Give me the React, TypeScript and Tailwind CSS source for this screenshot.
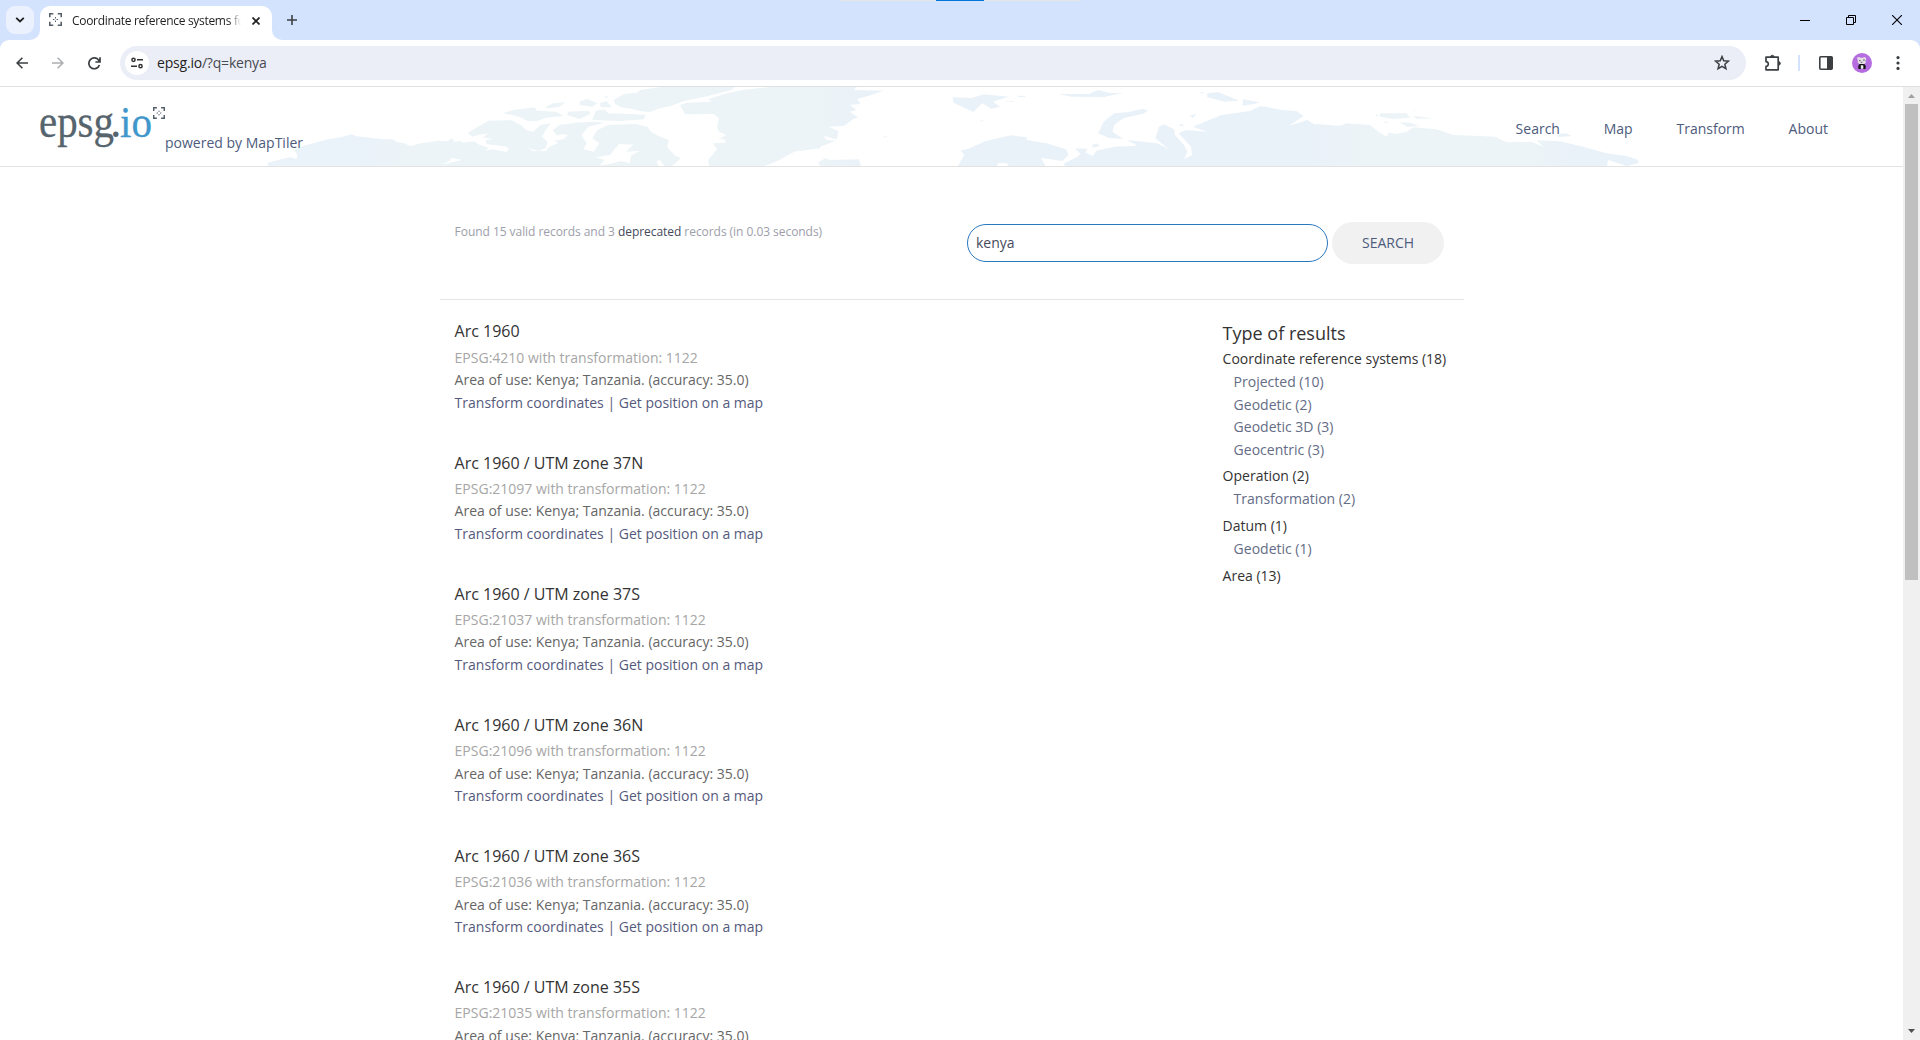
import React from "react";

const results = [
  { name: "Arc 1960", code: "4210" },
  { name: "Arc 1960 / UTM zone 37N", code: "21097" },
  { name: "Arc 1960 / UTM zone 37S", code: "21037" },
  { name: "Arc 1960 / UTM zone 36N", code: "21096" },
  { name: "Arc 1960 / UTM zone 36S", code: "21036" },
  { name: "Arc 1960 / UTM zone 35S", code: "21035" },
];

const groups = [
  {
    title: "Coordinate reference systems (18)",
    items: ["Projected (10)", "Geodetic (2)", "Geodetic 3D (3)", "Geocentric (3)"],
  },
  { title: "Operation (2)", items: ["Transformation (2)"] },
  { title: "Datum (1)", items: ["Geodetic (1)"] },
  { title: "Area (13)", items: [] },
];

function FocusMark({ className }: { className: string }) {
  return (
    <svg viewBox="0 0 14 14" className={className} fill="none" stroke="#55606a" strokeWidth="1.7">
      <path d="M.85 4.6V.85H4.600M9.400.85h3.750V4.600M13.150 9.400v3.750H9.400M4.600 13.150H.85V9.400" />
      <path d="M7 4.200v1.600M7 8.200v1.600M4.200 7h1.600M8.200 7h1.600" strokeWidth="1.1" />
    </svg>
  );
}

function TabStrip() {
  return (
    <div className="relative flex h-10 shrink-0 items-start bg-[#d3e2fd]">
      <div className="absolute top-0 left-[840px] h-px w-[241px] bg-[#e4e4e4] pl-24">
        <div className="h-px w-12 bg-[#0078d7]" />
      </div>
      <div className="mt-1.5 ml-1.5 flex h-7 w-7 items-center justify-center rounded-[9px] bg-[#ebf2fe]">
        <svg width="10" height="6" viewBox="0 0 10 6" fill="none" stroke="#1f1f1f" strokeWidth="1.8">
          <path d="M1.2.8 5 4.5 8.8.8" />
        </svg>
      </div>
      <div className="relative mt-1.5 ml-1.5 flex h-[34px] w-[232px] items-center rounded-t-[10px] bg-white pb-1">
        <svg className="absolute bottom-0 -left-2.5" width="10" height="10">
          <path d="M10 0v10H0A10 10 0 0 0 10 0" fill="#fff" />
        </svg>
        <svg className="absolute -right-2.5 bottom-0" width="10" height="10">
          <path d="M0 0v10h10A10 10 0 0 1 0 0" fill="#fff" />
        </svg>
        <FocusMark className="-mt-1 ml-[9px] h-[13px] w-[13px]" />
        <div className="ml-2.5 w-[169px] overflow-hidden text-[12px] leading-5 tracking-[-0.31px] whitespace-nowrap text-[#1f1f1f] [mask-image:linear-gradient(to_right,#000_157px,transparent_169px)]">
          Coordinate reference systems for
        </div>
        <svg className="ml-[11px]" width="8" height="8" viewBox="0 0 8 8" stroke="#1f1f1f" strokeWidth="1.7">
          <path d="M.5.5l7 7M7.5.5l-7 7" />
        </svg>
      </div>
      <svg className="mt-[15px] ml-[15px]" width="10" height="10" viewBox="0 0 10 10" stroke="#3c4043" strokeWidth="1.6">
        <path d="M5 0v10M0 5h10" />
      </svg>
      <div className="mt-[15px] mr-[18px] ml-auto flex gap-9">
        <svg width="10" height="10" stroke="#000">
          <path d="M0 5.5h10" />
        </svg>
        <svg width="10" height="10" fill="none" stroke="#000">
          <path d="M.5 2.5h7v7h-7zM2.5 2.5v-2h7v7h-2" />
        </svg>
        <svg width="10" height="10" stroke="#000" strokeWidth="1.1">
          <path d="M0 0l10 10M10 0L0 10" />
        </svg>
      </div>
    </div>
  );
}

function Toolbar() {
  return (
    <div className="shrink-0 bg-[#d3e2fd]">
      <div className="flex h-[47px] items-center rounded-t-[9px] border-b border-[#dedfe0] bg-white">
        <svg className="ml-4" width="12" height="12" viewBox="0 0 12 12" fill="none" stroke="#3c3f42" strokeWidth="1.6">
          <path d="M12 6H1.2M6.4.7 1.1 6l5.3 5.3" />
        </svg>
        <svg className="ml-6" width="12" height="12" viewBox="0 0 12 12" fill="none" stroke="#adafb1" strokeWidth="1.6">
          <path d="M0 6h10.8M5.6.7 10.9 6l-5.3 5.3" />
        </svg>
        <svg className="ml-[23.5px]" width="13" height="13" viewBox="0 0 13 13" fill="none" stroke="#3c3f42" strokeWidth="1.7">
          <path d="M11.4 8A5.4 5.4 0 1 1 10.8 3.4L12 5M12 .2V5H7.4" />
        </svg>
        <div className="ml-[19.5px] flex h-[34px] w-[1626px] items-center rounded-full bg-[#ebeef7]">
          <div className="ml-[5px] flex h-6 w-6 items-center justify-center rounded-full bg-white">
            <svg width="12" height="12" viewBox="0 0 12 12" fill="none" stroke="#303234" strokeWidth="1.5">
              <circle cx="2.5" cy="2.8" r="1.6" />
              <path d="M6 2.8h6M0 9.2h6" />
              <circle cx="9.5" cy="9.2" r="1.6" />
            </svg>
          </div>
          <span className="ml-2 pb-px text-[14px] tracking-[-0.2px] text-[#474a50]">
            <span className="text-[#1f1f1f]">epsg.io</span>/?q=kenya
          </span>
          <svg className="mr-4 ml-auto" width="16" height="16" viewBox="0 0 16 16" fill="none" stroke="#3c3f42" strokeWidth="1.5">
            <path d="M8 1.6l1.75 4.25 4.6.38-3.5 3 1.07 4.5L8 11.33l-3.92 2.4 1.07-4.5-3.5-3 4.6-.38z" />
          </svg>
        </div>
        <svg className="ml-[18px]" width="18" height="18" viewBox="0 0 18 18" fill="none" stroke="#3c3f42" strokeWidth="1.7">
          <path d="M2 3.2h12.2v12.6H2v-3.4c1.5 0 2.3-1.1 2.3-2.4S3.500 7.600 2 7.600z" strokeLinejoin="round" />
          <path d="M6.500 3a1.800 1.800 0 0 1 3.600 0zM14.600 7.600a1.800 1.800 0 0 1 0 3.600z" fill="#3c3f42" strokeWidth=".8" />
        </svg>
        <div className="ml-4 h-4 w-0.5 bg-[#d3e2fd]" />
        <svg className="ml-[19px]" width="14" height="14" fill="none" stroke="#3c3f42" strokeWidth="1.6">
          <rect x=".8" y=".8" width="12.400" height="12.400" rx="1" />
          <path d="M8.500 1h4.500v12H8.500z" fill="#3c3f42" strokeWidth="1" />
        </svg>
        <svg className="ml-[19px]" width="20" height="20" viewBox="0 0 20 20">
          <circle cx="10" cy="10" r="10" fill="#b56ce0" />
          <path d="M5 4.500l2-.5 1.500.8h2L13 4l1.200 1.500-.7 2.200.3 2-2 1.800H8L5.700 9.600l.1-2.400z" fill="#e3dfe4" />
          <path d="M7 7.600h1.600M11 7h1.800M8.800 9.300h1.500" stroke="#554c58" strokeWidth=".9" />
          <path d="M7.500 11h4.800l1.500 2-.3 3H6.500l-.3-3z" fill="#151317" />
          <path d="M8.800 12.300h2.500v3.500H8.800z" fill="#f2eff4" />
        </svg>
        <svg className="ml-6" width="4" height="14" fill="#3c3f42">
          <circle cx="2" cy="1.600" r="1.600" />
          <circle cx="2" cy="7" r="1.600" />
          <circle cx="2" cy="12.400" r="1.600" />
        </svg>
      </div>
    </div>
  );
}

function WorldBand() {
  return (
    <svg className="absolute top-0 left-0" width="1903" height="79" viewBox="0 0 1903 79">
      <defs>
        <linearGradient id="tint" gradientUnits="userSpaceOnUse" x1="260" y1="0" x2="1640" y2="0">
          <stop offset="0" stopColor="#eaf2fa" />
          <stop offset="0.07" stopColor="#eaf2fa" />
          <stop offset="0.11" stopColor="#ecf4f7" />
          <stop offset="0.4" stopColor="#ecf4f7" />
          <stop offset="0.44" stopColor="#eaf2f9" />
          <stop offset="0.76" stopColor="#eaf2f9" />
          <stop offset="0.81" stopColor="#ecf4f7" />
          <stop offset="0.92" stopColor="#ecf4f7" />
          <stop offset="0.95" stopColor="#eaf2f9" />
        </linearGradient>
        <mask id="land" maskUnits="userSpaceOnUse" x="0" y="0" width="1903" height="79">
          <g fill="#fff" transform="translate(260 -7) scale(.35714 .33333)">
            <path d="M22 262V248L60 238 85 232 102 238 105 225 95 210 120 198 150 190 185 179 225 172 258 163 270 169 295 172 345 178 370 178 385 186 405 190 420 199 450 190 500 182 525 184 537 175 545 186 560 182 568 188 600 184 615 195 640 203 630 212 650 208 690 216 697 206 690 200 635 192 632 180 652 178 625 172 640 160 610 165 595 170 582 158 610 140 640 122 705 121 730 135 745 150 765 155 785 135 815 130 800 150 790 170 805 185 800 205 780 213 750 204 765 214 800 213 810 200 835 190 825 182 850 178 862 165 830 160 820 150 850 135 880 128 940 125 965 128 920 140 900 165 915 190 905 208 935 215 950 190 930 175 945 150 975 135 1050 132 1085 140 1095 155 1120 170 1145 180 1140 200 1160 225 1178 235 1150 262 1135 262 1120 240 1110 244 1118 262Z" />
            <path d="M680 100L710 90 770 82 775 92 830 95 850 108 800 113 775 123 750 123 720 108ZM800 80L820 70 855 67 840 80 805 85ZM895 65L915 57 945 70 930 80 895 75ZM862 95L920 92 925 102 895 117 860 105ZM950 70L970 63 985 82 955 82ZM940 92L965 88 975 100 1080 104 1075 118 1010 123 930 120ZM960 50L975 48 970 54Z" />
            <path d="M990 60L1020 42 1055 38 1065 30 1130 20H1330L1320 30 1255 48 1190 62 1150 78 1120 85 1090 97 1060 92 1040 86 1010 82 995 72Z" />
            <path d="M1175 75L1195 68 1265 65 1255 58 1300 42 1350 30 1400 24 1450 20H1568V205L1500 213 1450 242 1405 262H1258L1255 240 1280 208 1268 190 1305 188 1300 178 1285 178 1305 165 1285 155 1280 140 1285 115 1270 102 1190 103 1185 92Z" />
          </g>
          <g fill="#000" transform="translate(260 -7) scale(.35714 .33333)">
            <path d="M940 232L980 225 1005 192 1045 194 1025 215 1065 212 1040 226 1035 250 1010 243 980 252 950 257 965 240ZM508 254L535 240 533 234 550 236 565 240 545 245Z" />
            <path d="M840 134L890 130 885 145 865 160 830 166 820 150Z" fill="#fff" />
          </g>
          <g fill="#fff" transform="translate(800 -7) scale(.35714 .33333)">
            <path d="M0 20H160L150 30 235 32 190 48 160 57 170 72 140 75 158 90 140 95 162 112 145 120 125 137 80 140 108 153 103 178 65 168 75 180 100 182 50 203 0 213Z" />
            <path d="M50 248L70 235 85 240 165 238 172 262H60ZM427 52L480 54 515 43 585 50 540 65 560 80 535 86 510 70 485 96 465 86 430 68ZM610 47h20v4h-20ZM568 66l30-3v3ZM725 42L760 42 810 42 835 30 865 38 905 40 875 45 850 52 760 50ZM228 173l15-6v4ZM505 121h8v3h-8Z" />
            <path d="M835 160L850 125 880 100 920 96 960 86 975 92 960 101 905 115 880 135 875 155 905 177 865 174ZM440 262L460 225 450 212 475 205 520 183 590 166 635 172 635 180 690 190 745 208 752 225 735 243 675 234 690 262H585L580 250H555L550 262Z" />
            <path d="M740 250L775 232 785 222 770 205 805 206 800 218 820 228 830 212 880 200 945 197 915 180 1000 190 1032 207 995 175 1005 140 1018 133 1048 148 1050 165 1075 195 1085 215 1075 238 1098 225 1095 200 1060 160 1080 150 1140 155 1100 140 1180 105 1260 93 1290 78 1350 90 1390 93 1410 108 1370 137 1420 120 1440 133 1500 138 1568 132V262H740ZM818 195l12-5 10 8-20 5ZM1140 40L1170 36 1230 62 1190 65 1140 52ZM1240 57L1290 68 1240 77ZM1115 37h15v4ZM1090 107l20-6-10 12ZM1060 137l10-6 5 8Z" />
          </g>
          <g fill="#fff" transform="translate(1250 -7) scale(.33333)">
            <path d="M200 132L270 138 290 130 360 135 385 155 410 170 415 158 440 162 470 155 490 142 560 148 610 165 690 168 735 170 770 187 845 186 880 200 860 181 930 184 990 198 1070 220 1130 228 1165 240 1165 250 1130 258 1075 240 1070 262H200Z" />
            <path d="M390 100L470 100 480 113 430 117 390 110ZM490 107L548 115 500 116ZM450 127L480 128 508 138 470 140ZM400 123l18 4-10 3ZM925 162L950 160 965 168 925 172ZM488 90h8v3ZM375 103l10 2-3 5Z" />
          </g>
        </mask>
      </defs>
      <rect width="1903" height="79" fill="url(#tint)" mask="url(#land)" />
    </svg>
  );
}

function SiteHeader() {
  return (
    <header className="relative flex h-20 shrink-0 border-b border-[#e3e3e3] text-[14px] text-[#4d5b7c]">
      <WorldBand />
      <div className="relative flex">
        <svg className="ml-10 overflow-visible" width="112" height="79" viewBox="0 0 112 79" fontFamily="'Liberation Serif', serif" fontSize="46">
          <text x="-1" y="50" fill="#56646d" stroke="#56646d" strokeWidth=".3" textLength="75" lengthAdjust="spacingAndGlyphs">epsg</text>
          <text x="70" y="50" fill="#56646d">.</text>
          <text x="80" y="50" fill="#3f97cb" stroke="#3f97cb" strokeWidth=".3" fontSize="44" textLength="32" lengthAdjust="spacingAndGlyphs">io</text>
        </svg>
        <FocusMark className="mt-5 ml-[1px] h-3 w-3" />
        <span className="mt-[46px] leading-5">powered by MapTiler</span>
      </div>
      <nav className="relative mr-[75px] ml-auto flex gap-[43.8px] pt-8 leading-5">
        <a>Search</a>
        <a>Map</a>
        <a>Transform</a>
        <a>About</a>
      </nav>
    </header>
  );
}

function Scrollbar() {
  return (
    <div className="flex w-[17px] shrink-0 flex-col items-center bg-[#f0f0f0]">
      <svg width="17" height="17" fill="#a0a0a0">
        <path d="M5 11l3.500-4L12 11z" />
      </svg>
      <div className="h-[476px] w-[13px] bg-[#c0c0c0]" />
      <svg className="mt-auto" width="17" height="17" fill="#505050">
        <path d="M5 6l3.500 4L12 6z" />
      </svg>
    </div>
  );
}

export default function App() {
  return (
    <div className="flex h-[1040px] w-[1920px] flex-col overflow-hidden bg-white font-['Open_Sans',sans-serif]">
      <TabStrip />
      <Toolbar />
      <div className="flex min-h-0 flex-1">
        <div className="flex min-w-0 flex-1 flex-col overflow-hidden">
          <SiteHeader />
          <main className="ml-[440px] w-[1024px] shrink-0">
            <div className="flex h-[133px] justify-between border-b border-[#e6e6e6] pr-5 pl-[14.6px]">
              <p className="mt-[55px] text-[12px] leading-5 tracking-[-0.05px] text-[#9c9eaa]">
                Found 15 valid records and 3 <a className="text-[#44495c]">deprecated</a> records (in 0.03 seconds)
              </p>
              <div className="mt-[55px] flex h-[42px] items-center gap-1 text-[14px]">
                <div className="flex h-[38px] w-[361px] items-center rounded-full border border-[#2878bf] pb-0.5 pl-2 text-[#464a5c]">kenya</div>
                <div className="flex h-[42px] w-[112px] items-center justify-center rounded-full bg-[#f1f1f1] pb-0.5 text-[#4d5b7c]">SEARCH</div>
              </div>
            </div>
            <div className="flex justify-between pr-[16.4px] pl-[14.6px]">
              <div className="pt-[17.4px]">
                {results.map((r) => (
                  <article key={r.code} className="h-[131.13px] text-[14px] leading-[22.4px]">
                    <h4 className="mb-[1.33px] text-[16px] leading-7 text-[#333]">{r.name}</h4>
                    <p className="text-[#a6a6a6]">EPSG:{r.code} with transformation: 1122</p>
                    <p className="text-[#666]">Area of use: Kenya; Tanzania. (accuracy: 35.0)</p>
                    <p className="text-[#555a7c]">Transform coordinates | Get position on a map</p>
                  </article>
                ))}
              </div>
              <aside className="w-[225px] pt-5 text-[14px]">
                <h3 className="text-[18px] leading-[26px] text-[#333]">Type of results</h3>
                {groups.map((g) => (
                  <div key={g.title} className="mb-[2.2px]">
                    <p className="leading-[25px] text-[#333]">{g.title}</p>
                    {g.items.map((item) => (
                      <p key={item} className="pl-[11px] leading-[22.5px] text-[#646c86]">{item}</p>
                    ))}
                  </div>
                ))}
              </aside>
            </div>
          </main>
        </div>
        <Scrollbar />
      </div>
    </div>
  );
}
